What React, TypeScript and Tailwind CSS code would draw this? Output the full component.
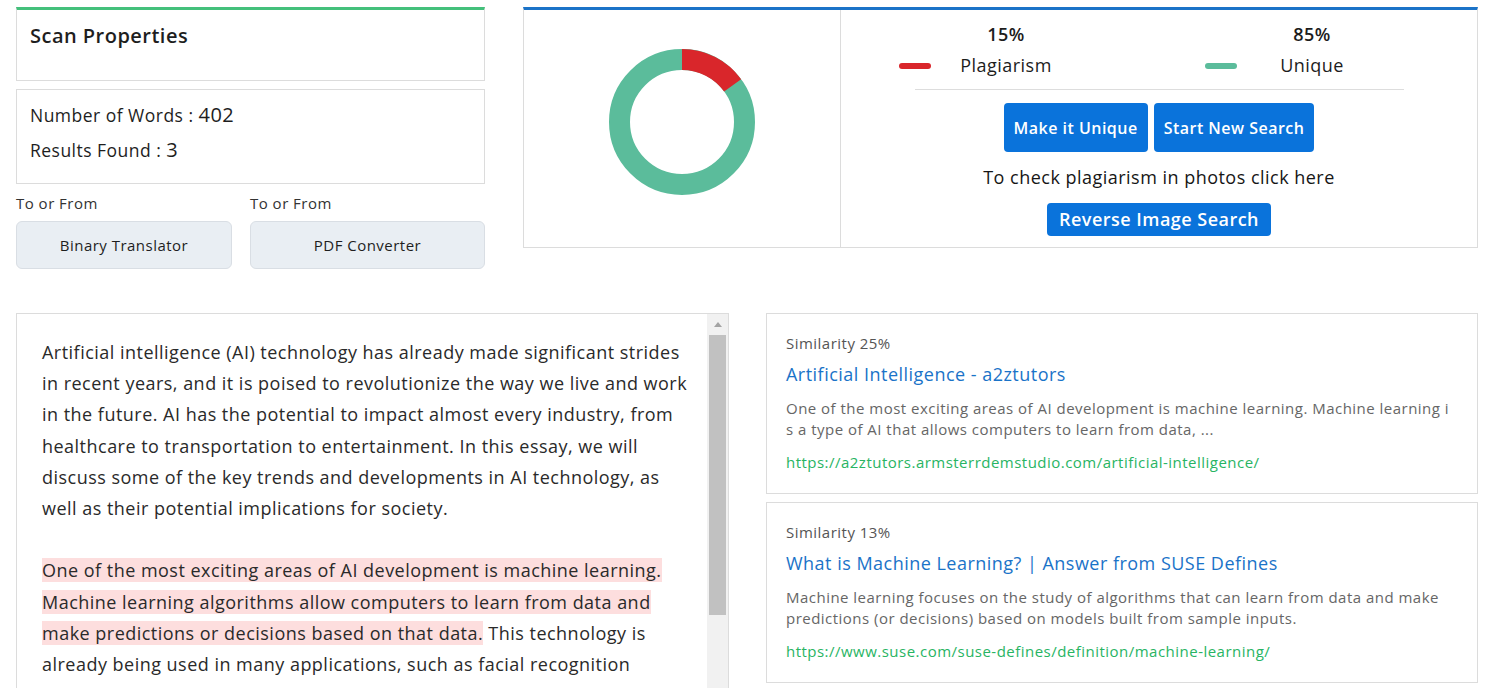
import React from "react";

const essay: { text: string; hl?: boolean }[][][] = [
  [
    [{ text: "Artificial intelligence (AI) technology has already made significant strides" }],
    [{ text: "in recent years, and it is poised to revolutionize the way we live and work" }],
    [{ text: "in the future. AI has the potential to impact almost every industry, from" }],
    [{ text: "healthcare to transportation to entertainment. In this essay, we will" }],
    [{ text: "discuss some of the key trends and developments in AI technology, as" }],
    [{ text: "well as their potential implications for society." }],
  ],
  [
    [{ text: "One of the most exciting areas of AI development is machine learning.", hl: true }],
    [{ text: "Machine learning algorithms allow computers to learn from data and", hl: true }],
    [
      { text: "make predictions or decisions based on that data.", hl: true },
      { text: " This technology is" },
    ],
    [{ text: "already being used in many applications, such as facial recognition" }],
  ],
];

const results = [
  {
    similarity: "Similarity 25%",
    title: "Artificial Intelligence - a2ztutors",
    desc: [
      "One of the most exciting areas of AI development is machine learning. Machine learning i",
      "s a type of AI that allows computers to learn from data, ...",
    ],
    url: "https://a2ztutors.armsterrdemstudio.com/artificial-intelligence/",
  },
  {
    similarity: "Similarity 13%",
    title: "What is Machine Learning? | Answer from SUSE Defines",
    desc: [
      "Machine learning focuses on the study of algorithms that can learn from data and make",
      "predictions (or decisions) based on models built from sample inputs.",
    ],
    url: "https://www.suse.com/suse-defines/definition/machine-learning/",
  },
];

const LegendItem = ({ pct, label, bar }: { pct: string; label: string; bar: string }) => (
  <div className="flex items-end gap-[20px]">
    <div className={`mb-[9px] h-[6px] w-[32px] rounded-full ${bar}`} />
    <div className="w-[110px] text-center text-[18px] font-medium text-[#1c1c1c]">
      <div className="leading-[26px] font-semibold">{pct}</div>
      <div className="mt-[5px] leading-[26px]">{label}</div>
    </div>
  </div>
);

const Donut = () => {
  const r = 62.5;
  const c = 2 * Math.PI * r;
  return (
    <svg width="150" height="150" viewBox="0 0 150 150">
      <circle cx="75" cy="75" r={r} fill="none" stroke="#5bbc9b" strokeWidth="21" />
      <circle
        cx="75"
        cy="75"
        r={r}
        fill="none"
        stroke="#d9262b"
        strokeWidth="21"
        strokeDasharray={`${c * 0.15} ${c}`}
        transform="rotate(-90 75 75)"
      />
    </svg>
  );
};

export default function App() {
  return (
    <div className="h-[688px] w-full overflow-hidden bg-white font-['Open_Sans',sans-serif] tracking-[0.03em] text-[#222]">
      {/* top row */}
      <div className="flex gap-[38px] pl-[16px] pr-[8px] pt-[7px]">
        <div className="w-[469px]">
          <div className="h-[74px] border border-[#dcdcdc] border-t-[3px] border-t-[#44c07b] px-[13px] pt-[13px]">
            <h2 className="text-[20px] leading-[26px] font-semibold text-[#1e1e1e]">Scan Properties</h2>
          </div>
          <div className="mt-[8px] h-[95px] border border-[#dcdcdc] px-[13px] pt-[12px] text-[17.5px] font-medium text-[#1e1e1e]">
            <div className="leading-[26px]">
              Number of Words : <span className="text-[20px]">402</span>
            </div>
            <div className="mt-[9px] leading-[26px]">
              Results Found : <span className="text-[20px]">3</span>
            </div>
          </div>
          <div className="mt-[8px] flex gap-[18px]">
            <div className="w-[216px]">
              <div className="text-[15px] leading-[22px] text-[#333]">To or From</div>
              <button className="mt-[7px] h-[48px] w-full rounded-md border border-[#d9dee4] bg-[#e9eef3] text-[15px] font-medium text-[#1e1e1e]">
                Binary Translator
              </button>
            </div>
            <div className="flex-1">
              <div className="text-[15px] leading-[22px] text-[#333]">To or From</div>
              <button className="mt-[7px] h-[48px] w-full rounded-md border border-[#d9dee4] bg-[#e9eef3] text-[15px] font-medium text-[#1e1e1e]">
                PDF Converter
              </button>
            </div>
          </div>
        </div>

        <div className="flex h-[241px] flex-1 border border-[#dcdcdc] border-t-[3px] border-t-[#1b73c8]">
          <div className="flex w-[317px] justify-center border-r border-[#dcdcdc] pt-[37px]">
            <Donut />
          </div>
          <div className="flex flex-1 flex-col pt-[11px]">
            <div className="flex gap-[144px] pl-[58px]">
              <LegendItem pct="15%" label="Plagiarism" bar="bg-[#d9262b]" />
              <LegendItem pct="85%" label="Unique" bar="bg-[#5bbc9b]" />
            </div>
            <div className="mx-auto mt-[11px] w-[489px] border-t border-[#dddddd]" />
            <div className="mt-[13px] flex justify-center gap-[6px]">
              <button className="h-[49px] rounded-[4px] bg-[#0a73db] px-[10px] text-[16px] font-semibold text-white">
                Make it Unique
              </button>
              <button className="h-[49px] rounded-[4px] bg-[#0a73db] px-[10px] text-[16px] font-semibold text-white">
                Start New Search
              </button>
            </div>
            <p className="mt-[13px] text-center text-[18px] leading-[24px] font-medium text-[#161616]">
              To check plagiarism in photos click here
            </p>
            <div className="mt-[14px] flex justify-center">
              <button className="h-[33px] rounded-[4px] bg-[#0a73db] px-[12px] text-[18px] font-semibold text-white">
                Reverse Image Search
              </button>
            </div>
          </div>
        </div>
      </div>

      {/* bottom row */}
      <div className="mt-[44px] flex gap-[37px] pl-[16px] pr-[8px]">
        <div className="flex h-[420px] w-[713px] border border-[#dcdcdc]">
          <div className="flex-1 overflow-hidden pl-[25px] pt-[23px] text-[18px] leading-[31.2px] text-[#2a2a2a]">
            {essay.map((para, pi) => (
              <div key={pi} className="mb-[31.2px]">
                {para.map((line, li) => (
                  <div key={li} className="whitespace-nowrap">
                    {line.map((seg, si) =>
                      seg.hl ? (
                        <span key={si} className="bg-[#fddede]">
                          {seg.text}
                        </span>
                      ) : (
                        <span key={si}>{seg.text}</span>
                      )
                    )}
                  </div>
                ))}
              </div>
            ))}
          </div>
          <div className="flex w-[21px] flex-col bg-[#f1f1f1]">
            <div className="flex h-[21px] items-center justify-center">
              <div className="h-0 w-0 border-x-[4px] border-b-[5px] border-x-transparent border-b-[#a3a3a3]" />
            </div>
            <div className="mx-[2px] h-[280px] bg-[#c1c1c1]" />
          </div>
        </div>

        <div className="flex flex-1 flex-col gap-[8px]">
          {results.map((r) => (
            <div key={r.url} className="h-[181px] border border-[#dcdcdc] px-[19px] pt-[19px]">
              <div className="text-[15px] leading-[20px] text-[#555]">{r.similarity}</div>
              <div className="mt-[8px] text-[18px] leading-[26px] text-[#1a73c8]">{r.title}</div>
              <div className="mt-[11px] text-[15px] leading-[21px] text-[#666]">
                {r.desc.map((d) => (
                  <div key={d} className="whitespace-nowrap">
                    {d}
                  </div>
                ))}
              </div>
              <div className="mt-[11px] text-[15px] leading-[22px] text-[#28b463]">{r.url}</div>
            </div>
          ))}
        </div>
      </div>
    </div>
  );
}
